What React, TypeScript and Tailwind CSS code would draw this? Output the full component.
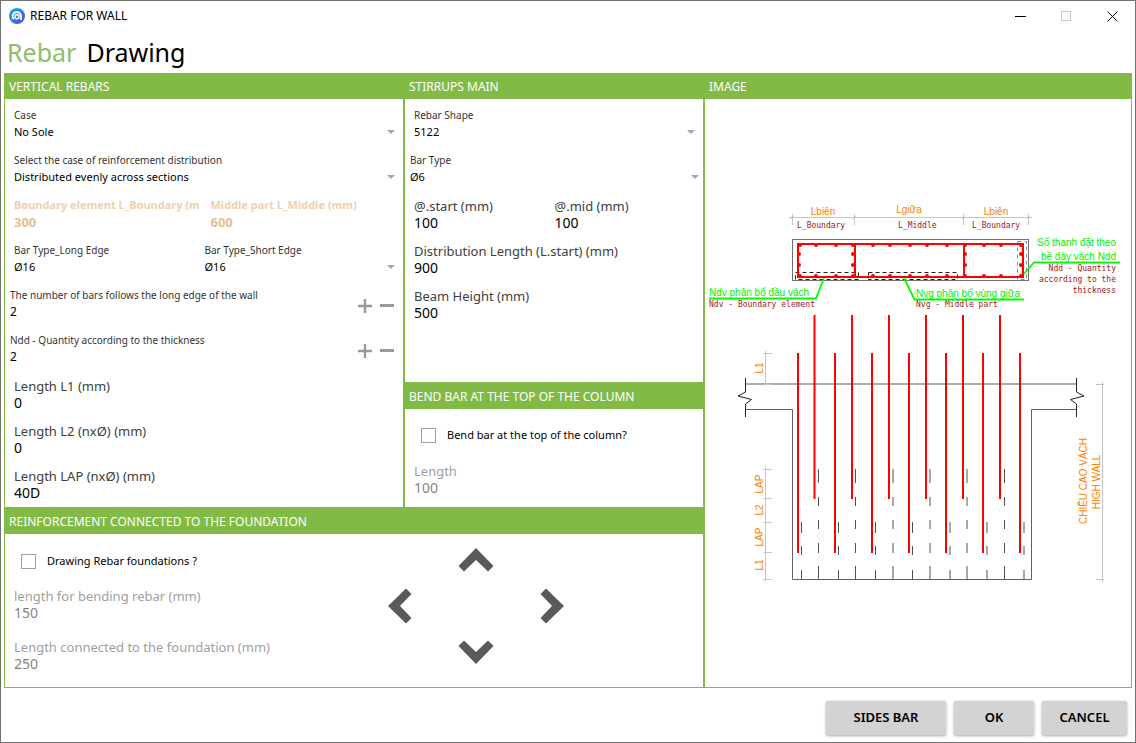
import React from "react";

const longBars = [814.5, 852, 889, 926, 963, 1000];
const shortBars = [798, 835, 872, 909, 946, 983, 1020];
const longDashes = [818.5, 855.5, 893, 930, 967, 1004.5];
const shortDashes = [801.5, 838.5, 875.5, 912.5, 950, 987, 1024];
const topDots = [800, 816, 836, 853, 873, 890, 910, 927, 947, 965, 984, 1001, 1021];

interface panelProps {
  title: string;
  className?: string;
  children: React.ReactNode;
}

const Panel = ({ title, className = "", children }: panelProps) => (
  <section className={`flex flex-col border border-[#82ba46] ${className}`}>
    <h2 className="h-[25px] shrink-0 bg-[#82ba46] px-1 text-[12px] leading-[25px] text-white">
      {title}
    </h2>
    {children}
  </section>
);

interface fieldProps {
  id: string;
  label: string;
  value: string;
  variant?: "small" | "large" | "accent";
  disabled?: boolean;
}

const labelStyles = {
  small: "text-[10px] text-[#333333]",
  large: "text-[13px] text-[#404040]",
  accent: "overflow-hidden text-[11px] font-bold text-[#f0cfb0]",
};

const valueStyles = {
  small: "text-[12px] text-black",
  large: "text-[14px] text-black",
  accent: "text-[13px] font-bold text-[#e6bd94]",
};

const Field = ({ id, label, value, variant = "large", disabled }: fieldProps) => (
  <div className={`min-w-0 flex-1 ${disabled ? "opacity-50" : ""}`}>
    <label htmlFor={id} className={`block whitespace-nowrap leading-4 ${labelStyles[variant]}`}>
      {label}
    </label>
    <input
      id={id}
      defaultValue={value}
      disabled={disabled}
      className={`block h-[18px] w-full bg-transparent leading-[18px] outline-none ${valueStyles[variant]}`}
    />
  </div>
);

interface selectProps {
  id: string;
  label: string;
  value: string;
  arrow?: boolean;
}

const SelectField = ({ id, label, value, arrow = true }: selectProps) => (
  <div className="min-w-0 flex-1">
    <label htmlFor={id} className="block whitespace-nowrap text-[10px] leading-4 text-[#333333]">
      {label}
    </label>
    <div className="flex items-center">
      <select
        id={id}
        defaultValue={value}
        className="h-[18px] min-w-0 flex-1 appearance-none bg-transparent text-[11px] leading-[18px] text-black outline-none"
      >
        <option>{value}</option>
      </select>
      {arrow && (
        <svg width="8" height="4" viewBox="0 0 8 4" fill="#a6a6a6">
          <path d="M0 0h8L4 4z" />
        </svg>
      )}
    </div>
  </div>
);

const Stepper = ({ id, label, value }: { id: string; label: string; value: string }) => (
  <div className="flex items-center gap-2 pr-px">
    <Field id={id} label={label} value={value} variant="small" />
    <button aria-label="Increase" className="pt-1">
      <svg width="14" height="14" viewBox="0 0 14 14" fill="#999999">
        <path d="M5.800 0h2.400v5.800H14v2.400H8.200V14H5.800V8.200H0V5.800h5.800z" />
      </svg>
    </button>
    <button aria-label="Decrease" className="pt-1">
      <svg width="14" height="14" viewBox="0 0 14 14" fill="#999999">
        <path d="M0 5h14v3H0z" />
      </svg>
    </button>
  </div>
);

const CheckField = ({ id, label }: { id: string; label: string }) => (
  <div className="flex items-center gap-[11px] pl-[7px]">
    <input
      id={id}
      type="checkbox"
      className="h-[15px] w-[15px] appearance-none border border-[#a0a0a0] bg-white checked:bg-[#82ba46]"
    />
    <label htmlFor={id} className="text-[11px] leading-4 text-black">
      {label}
    </label>
  </div>
);

const Chevron = ({ label, turn }: { label: string; turn: string }) => (
  <button aria-label={label} className={turn}>
    <svg width="36" height="36" viewBox="0 0 36 36" fill="#5a5a5a">
      <path d="M18 6l17.500 18-5.500 5.500L18 18 6 29.500.500 24z" />
    </svg>
  </button>
);

const WallDrawing = () => (
  <svg viewBox="705 99 426 588" className="w-full" fontFamily="Liberation Sans, sans-serif" fontSize="10">
    {/* dimension line over the section */}
    <g stroke="#c4c4c4" fill="none">
      <path d="M789 217.500H1032M792.500 214v11M854.500 214v11M963.500 214v11M1028.500 214v11" />
      <path d="M791 219l3-3M853 219l3-3M962 219l3-3M1027 219l3-3" />
    </g>
    <g fill="#ff8000" textAnchor="middle">
      <text x="823" y="215">Lbiên</text>
      <text x="909" y="213">Lgiữa</text>
      <text x="996" y="215">Lbiên</text>
    </g>
    <g fill="#a01818" fontFamily="DejaVu Sans Mono, monospace" fontSize="8">
      <text x="797" y="228">L_Boundary</text>
      <text x="898" y="228">L_Middle</text>
      <text x="972" y="228">L_Boundary</text>
      <text x="709" y="307">Ndv - Boundary element</text>
      <text x="916" y="307">Nvg - Middle part</text>
      <g textAnchor="end">
        <text x="1116" y="271">Ndd - Quantity</text>
        <text x="1116" y="282">according to the</text>
        <text x="1116" y="293">thickness</text>
      </g>
    </g>

    {/* wall cross section */}
    <rect x="792.500" y="239.500" width="236" height="41" fill="none" stroke="#707070" />
    <g fill="none" stroke="#202020" strokeDasharray="4 3">
      <rect x="795.500" y="272.500" width="63" height="7" />
      <rect x="868.500" y="272.500" width="89" height="7" />
      <rect x="1017.500" y="241.500" width="9" height="38" stroke="#909090" />
    </g>
    <g fill="none" stroke="#ff0000" strokeWidth="2">
      <rect x="798" y="244" width="225" height="33" />
      <path d="M855 244v33M964 244v33" />
    </g>
    <g fill="#ff0000">
      {topDots.map((x) => (
        <g key={x}>
          <circle cx={x} cy="245" r="2" />
          <circle cx={x} cy="276" r="2" />
        </g>
      ))}
      {[799, 853, 965, 1021].map((x) => (
        <g key={x}>
          <circle cx={x} cy="254" r="2" />
          <circle cx={x} cy="265" r="2" />
        </g>
      ))}
    </g>

    {/* leaders */}
    <g fill="none" stroke="#00ff00" strokeWidth="1.800">
      <path d="M709 298.500H816L824 278" />
      <path d="M904 278L914.500 299.500H1024" />
      <path d="M1024 274L1034 262.500H1120" />
    </g>
    <g fill="#00f000">
      <text x="709" y="296">Ndv phân bố đầu vách</text>
      <text x="916" y="297">Nvg phân bố vùng giữa</text>
      <text x="1116" y="246" textAnchor="end">Số thanh đặt theo</text>
      <text x="1116" y="260" textAnchor="end">bề dày vách Ndd</text>
    </g>

    {/* elevation */}
    <g fill="none" stroke="#606060">
      <path d="M745.500 384H1076.500" stroke="#909090" strokeWidth="1.500" />
      <path d="M745.500 409.500H792.500V579.500H1031.500V409.500H1076.500" />
      <path d="M745.500 378v14l-7.500 4 13.500 3.500-6 4.500v13" stroke="#202020" />
      <path d="M1076.500 378v14l7.500 4-13.500 3.500 6 4.500v13" stroke="#202020" />
    </g>
    <g stroke="#505050">
      {longDashes.map((x) => (
        <path key={x} d={`M${x} 469v14M${x} 497v9M${x} 520v9M${x} 543v10M${x} 566v13`} />
      ))}
      {shortDashes.map((x) => (
        <path key={x} d={`M${x} 522v11M${x} 546v9M${x} 570v9`} />
      ))}
    </g>
    <g stroke="#ff0000" strokeWidth="2">
      {longBars.map((x) => (
        <path key={x} d={`M${x} 315V499`} />
      ))}
      {shortBars.map((x) => (
        <path key={x} d={`M${x} 353V553`} />
      ))}
    </g>

    {/* side dimensions */}
    <g stroke="#c4c4c4" fill="none">
      <path d="M765.500 351V386M763 353.500h9M763 384.500h9" />
      <path d="M765.500 467V581M763 469.500h9M763 498.500h9M763 522.500h9M763 552.500h9M763 579.500h9" />
      <path d="M1102.500 382V582M1096 384.500h8M1096 579.500h8" />
    </g>
    <g fill="#ff8000" textAnchor="middle">
      <text transform="translate(763 368) rotate(-90)">L1</text>
      <text transform="translate(763 484) rotate(-90)">LAP</text>
      <text transform="translate(763 510) rotate(-90)">L2</text>
      <text transform="translate(763 537) rotate(-90)">LAP</text>
      <text transform="translate(763 565) rotate(-90)">L1</text>
      <text transform="translate(1087 481) rotate(-90)">CHIỀU CAO VÁCH</text>
      <text transform="translate(1100 482) rotate(-90)">HIGH WALL</text>
    </g>
  </svg>
);

const buttonStyle =
  "h-[34px] rounded-[2px] bg-[#d3d3d3] text-[13px] font-semibold text-black shadow-[0_1px_3px_rgba(0,0,0,0.35)]";

const App = () => {
  return (
    <div className="flex min-h-screen flex-col border border-[#707070] bg-white font-['Noto_Sans',sans-serif]">
      <header className="flex h-[30px] items-center pl-2">
        <svg width="16" height="16" viewBox="0 0 16 16" fill="none">
          <defs>
            <linearGradient id="logo" x1="0" y1="0" x2="1" y2="1">
              <stop offset="0" stopColor="#18b0ea" />
              <stop offset="1" stopColor="#5548d8" />
            </linearGradient>
          </defs>
          <circle cx="8" cy="8" r="8" fill="url(#logo)" />
          <path
            d="M4.800 11.200A4.200 4.200 0 1 1 12 8.200V12"
            stroke="white"
            strokeWidth="1.800"
          />
          <circle cx="8" cy="8.800" r="2" stroke="white" strokeWidth="1.400" />
        </svg>
        <h1 className="pl-[5px] text-[12px] leading-4 text-black">REBAR FOR WALL</h1>
        <div className="ml-auto flex items-center gap-[35px] pr-[17px]">
          <button aria-label="Minimize">
            <svg width="11" height="11" viewBox="0 0 11 11" stroke="black">
              <path d="M0 5.500h11" />
            </svg>
          </button>
          <button aria-label="Maximize" disabled>
            <svg width="11" height="11" viewBox="0 0 11 11" stroke="#c8c8c8" fill="none">
              <rect x=".5" y=".5" width="9" height="9" />
            </svg>
          </button>
          <button aria-label="Close">
            <svg width="11" height="11" viewBox="0 0 11 11" stroke="black">
              <path d="M.5.5l10 10M10.500.5l-10 10" />
            </svg>
          </button>
        </div>
      </header>

      <nav className="flex h-[42px] items-center gap-[10px] pl-[6px] text-[25px] leading-[42px]">
        <button className="text-[#8fbc6a]">Rebar</button>
        <button className="text-black">Drawing</button>
      </nav>

      <main className="mx-[3px] flex">
        <div className="w-[700px] shrink-0">
          <div className="flex">
            <Panel title="VERTICAL REBARS" className="w-[400px]">
              <div className="flex flex-col gap-[11px] pt-2 pr-2 pb-[5px]">
                <div className="pl-[9px]">
                  <SelectField id="case" label="Case" value="No Sole" />
                </div>
                <div className="pl-[9px]">
                  <SelectField
                    id="distribution"
                    label="Select the case of reinforcement distribution"
                    value="Distributed evenly across sections"
                  />
                </div>
                <div className="flex gap-3 pl-[9px]">
                  <Field
                    id="boundary"
                    label="Boundary element L_Boundary (mm)"
                    value="300"
                    variant="accent"
                  />
                  <Field id="middle" label="Middle part L_Middle (mm)" value="600" variant="accent" />
                </div>
                <div className="flex pl-[9px]">
                  <SelectField id="longEdge" label="Bar Type_Long Edge" value="Ø16" arrow={false} />
                  <SelectField id="shortEdge" label="Bar Type_Short Edge" value="Ø16" />
                </div>
                <div className="pl-[5px]">
                  <Stepper
                    id="barCount"
                    label="The number of bars follows the long edge of the wall"
                    value="2"
                  />
                </div>
                <div className="pl-[5px]">
                  <Stepper id="ndd" label="Ndd - Quantity according to the thickness" value="2" />
                </div>
                <div className="flex flex-col gap-[11px] pt-px pl-[9px]">
                  <Field id="l1" label="Length L1 (mm)" value="0" />
                  <Field id="l2" label="Length L2 (nxØ) (mm)" value="0" />
                  <Field id="lap" label="Length LAP (nxØ) (mm)" value="40D" />
                </div>
              </div>
            </Panel>

            <div className="flex w-[300px] flex-col">
              <Panel title="STIRRUPS MAIN" className="flex-1">
                <div className="flex flex-col gap-[11px] pt-2">
                  <div className="pr-2 pl-[9px]">
                    <SelectField id="shape" label="Rebar Shape" value="5122" />
                  </div>
                  <div className="pr-1 pl-[5px]">
                    <SelectField id="barType" label="Bar Type" value="Ø6" />
                  </div>
                  <div className="flex pt-px pr-2 pl-[9px]">
                    <Field id="start" label="@.start (mm)" value="100" />
                    <Field id="mid" label="@.mid (mm)" value="100" />
                  </div>
                  <div className="flex flex-col gap-[11px] pr-2 pl-[9px]">
                    <Field id="lstart" label="Distribution Length (L.start) (mm)" value="900" />
                    <Field id="beam" label="Beam Height (mm)" value="500" />
                  </div>
                </div>
              </Panel>
              <Panel title="BEND BAR AT THE TOP OF THE COLUMN">
                <div className="flex flex-col gap-5 px-[9px] pt-[18px] pb-[10px]">
                  <CheckField id="bend" label="Bend bar at the top of the column?" />
                  <Field id="bendLength" label="Length" value="100" disabled />
                </div>
              </Panel>
            </div>
          </div>

          <Panel title="REINFORCEMENT CONNECTED TO THE FOUNDATION">
            <div className="flex items-start pt-2 pr-[133px] pb-[14px] pl-[9px]">
              <div className="flex min-w-0 flex-1 flex-col gap-[17px] pt-[11px]">
                <div className="pb-[2px]">
                  <CheckField id="foundation" label="Drawing Rebar foundations ?" />
                </div>
                <Field id="bendRebar" label="length for bending rebar (mm)" value="150" disabled />
                <Field
                  id="connected"
                  label="Length connected to the foundation (mm)"
                  value="250"
                  disabled
                />
              </div>
              <div className="flex items-center gap-10">
                <Chevron label="Left" turn="-rotate-90" />
                <div className="flex flex-col gap-14">
                  <Chevron label="Up" turn="rotate-0" />
                  <Chevron label="Down" turn="rotate-180" />
                </div>
                <Chevron label="Right" turn="rotate-90" />
              </div>
            </div>
          </Panel>
        </div>

        <Panel title="IMAGE" className="min-w-0 flex-1">
          <WallDrawing />
        </Panel>
      </main>

      <footer className="flex justify-end gap-2 pt-[13px] pr-2 pb-[7px]">
        <button className={`w-[120px] ${buttonStyle}`}>SIDES BAR</button>
        <button className={`w-[80px] ${buttonStyle}`}>OK</button>
        <button className={`w-[85px] ${buttonStyle}`}>CANCEL</button>
      </footer>
    </div>
  );
};

export default App;
